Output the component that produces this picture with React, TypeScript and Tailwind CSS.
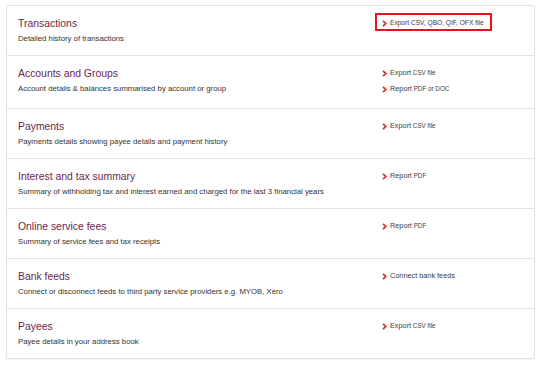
import React from "react";

type LinkItem = { main: string; small?: string; highlight?: boolean; uniform?: boolean };

type Section = {
  title: string;
  description: string;
  links: LinkItem[];
};

const sections: Section[] = [
  {
    title: "Transactions",
    description: "Detailed history of transactions",
    links: [{ main: "Export CSV, QBO, QIF, OFX file", highlight: true, uniform: true }],
  },
  {
    title: "Accounts and Groups",
    description: "Account details & balances summarised by account or group",
    links: [
      { main: "Export", small: "CSV file" },
      { main: "Report", small: "PDF or DOC" },
    ],
  },
  {
    title: "Payments",
    description: "Payments details showing payee details and payment history",
    links: [{ main: "Export", small: "CSV file" }],
  },
  {
    title: "Interest and tax summary",
    description:
      "Summary of withholding tax and interest earned and charged for the last 3 financial years",
    links: [{ main: "Report", small: "PDF" }],
  },
  {
    title: "Online service fees",
    description: "Summary of service fees and tax receipts",
    links: [{ main: "Report", small: "PDF" }],
  },
  {
    title: "Bank feeds",
    description: "Connect or disconnect feeds to third party service providers e.g. MYOB, Xero",
    links: [{ main: "Connect bank feeds" }],
  },
  {
    title: "Payees",
    description: "Payee details in your address book",
    links: [{ main: "Export", small: "CSV file" }],
  },
];

function Chevron() {
  return (
    <svg width="5" height="7" viewBox="0 0 5 7" className="shrink-0" aria-hidden="true">
      <polyline points="1,0.8 3.8,3.5 1,6.2" fill="none" stroke="#d52b2f" strokeWidth="1.7" />
    </svg>
  );
}

function ReportLink({ link }: { link: LinkItem }) {
  return (
    <a href="#" className="relative flex h-[12px] items-center gap-[3px] self-start text-[#3d3d3d]">
      <Chevron />
      {link.uniform ? (
        <span className="text-[6.6px] leading-[12px]">{link.main}</span>
      ) : (
        <span className="text-[7.3px] leading-[12px]">
          {link.main}
          {link.small ? <span className="text-[6.3px]"> {link.small}</span> : null}
        </span>
      )}
      {link.highlight ? (
        <span className="absolute -top-[4px] -bottom-[2px] -left-[7px] -right-[8px] border-2 border-[#e8121b]" />
      ) : null}
    </a>
  );
}

export default function App() {
  return (
    <div className="min-h-[366px] bg-white pl-[6px] pt-[5px]" style={{ fontFamily: '"Liberation Sans", Arial, sans-serif' }}>
      <div className="w-[529px] rounded-[2px] border border-[#e3e3e1] shadow-[0_1px_1px_rgba(0,0,0,0.05)]">
        {sections.map((s, i) => (
          <div
            key={s.title}
            className={[
              "grid grid-cols-[375px_1fr] pt-[11px] pb-[11px]",
              i < sections.length - 1 ? "border-b border-[#e3e3e1]" : "",
            ].join(" ")}
          >
            <div className="pl-[11px]">
              <h2 className="text-[10.4px] leading-[14px] text-[#6c1f4a]">{s.title}</h2>
              <p className="mt-[2px] text-[7.75px] leading-[11px] text-[#333]">{s.description}</p>
            </div>
            <div className="flex flex-col gap-[4px] pb-[2px]">
              {s.links.map((l) => (
                <ReportLink key={l.main + (l.small ?? "")} link={l} />
              ))}
            </div>
          </div>
        ))}
      </div>
    </div>
  );
}
